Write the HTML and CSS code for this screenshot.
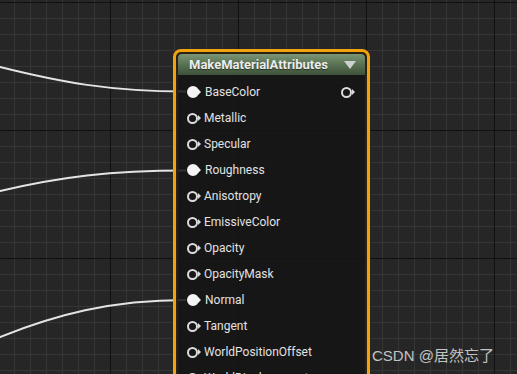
FILE: index.html
```html
<!DOCTYPE html>
<html lang="en">
<head>
	<meta charset="UTF-8">
	<title>MakeMaterialAttributes</title>
	<link rel="stylesheet" href="styles.css">
</head>
<body>
	<div class="graph">
		<!-- wires coming in from nodes off to the left -->
		<svg class="wires" width="517" height="374" viewBox="0 0 517 374">
			<path d="M -20 62 L 0 67 C 60 82, 110 91.5, 186 91.5" />
			<path d="M -20 195.7 L 0 191 C 60 177, 110 170.5, 186 170.5" />
			<path d="M -20 345 L 0 337 C 55 315, 110 300, 186 300" />
		</svg>

		<div class="node">
			<div class="head">
				<span class="title">MakeMaterialAttributes</span>
				<span class="arrow"></span>
			</div>
			<div class="body">
				<div class="row">
					<span class="pin full"></span><span class="label">BaseColor</span>
					<span class="pin out"></span>
				</div>
				<div class="row"><span class="pin"></span><span class="label">Metallic</span></div>
				<div class="row"><span class="pin"></span><span class="label">Specular</span></div>
				<div class="row"><span class="pin full"></span><span class="label">Roughness</span></div>
				<div class="row"><span class="pin"></span><span class="label">Anisotropy</span></div>
				<div class="row"><span class="pin"></span><span class="label">EmissiveColor</span></div>
				<div class="row"><span class="pin"></span><span class="label">Opacity</span></div>
				<div class="row"><span class="pin"></span><span class="label">OpacityMask</span></div>
				<div class="row"><span class="pin full"></span><span class="label">Normal</span></div>
				<div class="row"><span class="pin"></span><span class="label">Tangent</span></div>
				<div class="row"><span class="pin"></span><span class="label">WorldPositionOffset</span></div>
				<div class="row"><span class="pin"></span><span class="label">WorldDisplacement</span></div>
			</div>
		</div>

		<div class="mark">CSDN @居然忘了</div>
	</div>
</body>
</html>
```

FILE: styles.css
```css
html, body{
	margin: 0;
	padding: 0;
}
body{
	width: 517px;
	height: 374px;
	overflow: hidden;
	font-family: Roboto, "Noto Sans", "Noto Sans CJK SC", sans-serif;
}
.graph{
	position: relative;
	width: 517px;
	height: 374px;
	overflow: hidden;
	background-color: #262626;
	background-image:
		linear-gradient(to right, #111 1px, transparent 1px),
		linear-gradient(to bottom, #111 1px, transparent 1px),
		linear-gradient(to right, #353535 1px, transparent 1px),
		linear-gradient(to bottom, #353535 1px, transparent 1px);
	background-size: 128px 128px, 128px 128px, 16px 16px, 16px 16px;
	background-position: 110px 0, 0 2px, 14px 0, 0 2px;
}
.wires{
	position: absolute;
	left: 0;
	top: 0;
}
.wires path{
	fill: none;
	stroke: #e4e4e4;
	stroke-width: 2;
}

/* node */
.node{
	position: absolute;
	left: 173px;
	top: 49px;
	width: 187px;
	height: 340px;
	border: 3px solid #f2a20c;
	border-radius: 8px;
	padding: 2px;
	background: rgba(20, 20, 20, 0.86);
	box-shadow: inset 0 0 0 2px #2b230f;
}
.head{
	display: flex;
	align-items: center;
	height: 21px;
	padding: 0 9px 0 11px;
	border-radius: 4px 4px 0 0;
	background: linear-gradient(to bottom, #7b9676 0%, #5b7555 45%, #3e513a 100%);
}
.title{
	flex: 1;
	color: #ececec;
	font-size: 13px;
	font-weight: bold;
	text-shadow: 0 1px 1px rgba(0,0,0,0.5);
}
.arrow{
	width: 0;
	height: 0;
	border-left: 6px solid transparent;
	border-right: 6px solid transparent;
	border-top: 8px solid #d0d0d0;
}
.body{
	padding: 4px 11px 0 6px;
}
.row{
	display: flex;
	align-items: center;
	height: 26px;
}
.label{
	flex: 1;
	margin-left: 6px;
	color: #e2e2e2;
	font-size: 12px;
	white-space: nowrap;
}

/* pins: ring or dot with a little arrow */
.pin{
	position: relative;
	width: 7px;
	height: 7px;
	margin-left: 3px;
	border: 2px solid #dcdcdc;
	border-radius: 50%;
}
.pin::after{
	content: "";
	position: absolute;
	left: 9px;
	top: 0.5px;
	border-top: 3px solid transparent;
	border-bottom: 3px solid transparent;
	border-left: 3px solid #dcdcdc;
}
.pin.full{
	background: #f4f4f4;
	border-color: #f4f4f4;
	width: 8px;
	height: 8px;
}
.pin.full::after{
	top: 1px;
	border-left-color: #f4f4f4;
}
.pin.out{
	margin-right: 2px;
}

.mark{
	position: absolute;
	left: 372px;
	top: 344px;
	color: rgba(225, 225, 225, 0.85);
	font-family: "Liberation Sans", "Noto Sans CJK SC", sans-serif;
	font-size: 15px;
}
```
